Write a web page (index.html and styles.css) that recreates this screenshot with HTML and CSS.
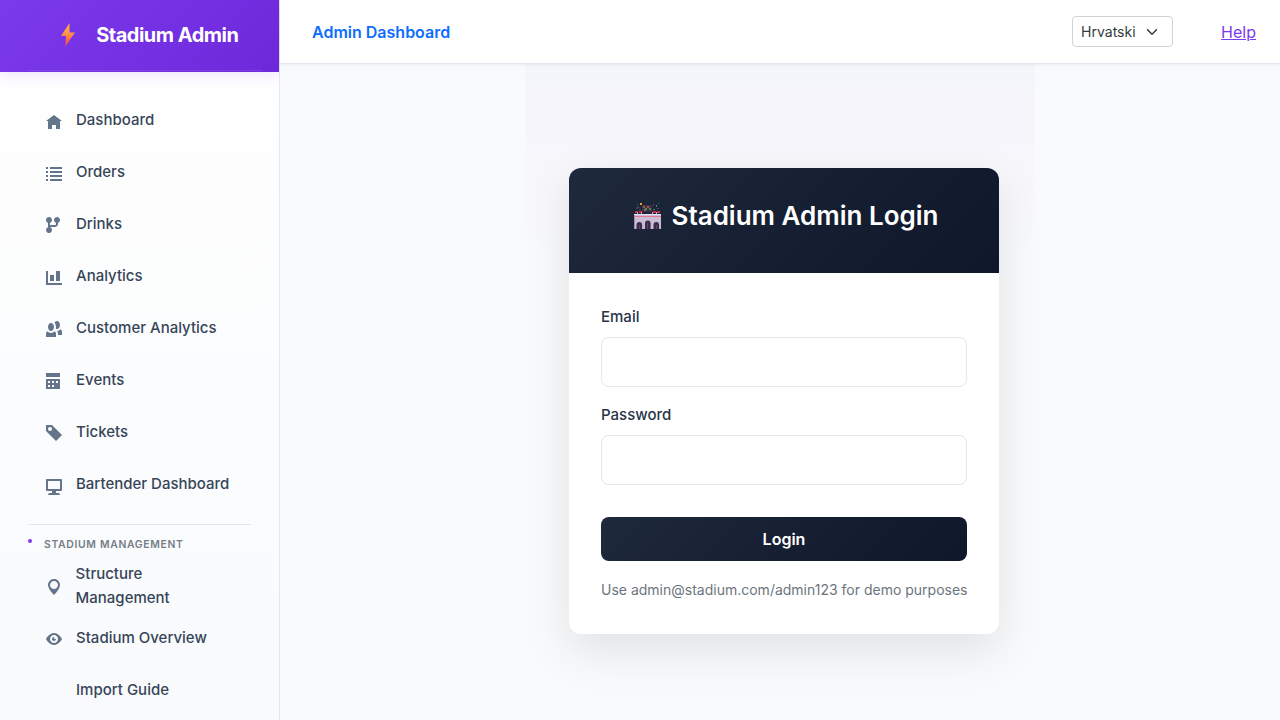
FILE: index.html
```html
<!DOCTYPE html>
<html lang="hr">
<head>
<meta charset="utf-8">
<title>Stadium Admin</title>
<link rel="stylesheet" href="styles.css">
</head>
<body>
<div class="app">
  <aside class="sidebar">
    <div class="brand">
      <svg class="bolt" viewBox="0 0 14 24"><defs><linearGradient id="fire" x1="0" y1="0" x2="0" y2="1"><stop offset="0" stop-color="#ffb13b"/><stop offset=".4" stop-color="#ff9a48"/><stop offset="1" stop-color="#f43f4e"/></linearGradient></defs><path fill="url(#fire)" d="M8.5 0 0 13h5l-.7 10.5L14 9.5H8.5z"/></svg>
      <span class="brand-name">Stadium Admin</span>
    </div>
    <nav class="nav">
      <a class="item"><svg class="icon low" viewBox="0 0 8 8"><path d="M4 0l-4 3h1v4h2v-2h2v2h2v-4.03l1 .03-4-3z"/></svg><span>Dashboard</span></a>
      <a class="item"><svg class="icon low" viewBox="0 0 8 8"><path d="M0 0h1v1H0zM2 0h6v1H2zM0 2h1v1H0zM2 2h6v1H2zM0 4h1v1H0zM2 4h6v1H2zM0 6h1v1H0zM2 6h6v1H2z"/></svg><span>Orders</span></a>
      <a class="item"><svg class="icon" viewBox="0 0 8 8"><path d="M1.5 0c-.83 0-1.5.67-1.5 1.5 0 .66.41 1.2 1 1.41v2.19c-.59.2-1 .75-1 1.41 0 .83.67 1.5 1.5 1.5s1.5-.67 1.5-1.5c0-.6-.34-1.1-.84-1.35.09-.09.21-.16.34-.16h2c.82 0 1.5-.68 1.5-1.5v-.59c.59-.2 1-.75 1-1.41 0-.83-.67-1.5-1.5-1.5s-1.5.67-1.5 1.5c0 .66.41 1.2 1 1.41v.59c0 .28-.22.5-.5.5h-2c-.17 0-.35.04-.5.09v-1.19c.59-.2 1-.75 1-1.41 0-.83-.67-1.5-1.5-1.5z"/></svg><span>Drinks</span></a>
      <a class="item"><svg class="icon low" viewBox="0 0 8 8"><path d="M0 0v7h8v-1h-7v-6h-1zm5 0v5h2v-5h-2zm-3 2v3h2v-3h-2z"/></svg><span>Analytics</span></a>
      <a class="item"><svg class="icon" viewBox="0 0 8 8"><path d="M5.5 0c-.51 0-.95.35-1.22.88.45.54.72 1.28.72 2.13 0 .29-.03.55-.09.81.19.11.38.19.59.19.83 0 1.5-.9 1.5-2s-.67-2-1.5-2zm-3 1c-.83 0-1.5.9-1.5 2s.67 2 1.5 2 1.5-.9 1.5-2-.67-2-1.5-2zm4.75 3.16c-.43.51-1.02.82-1.69.84.27.38.44.84.44 1.34v.66h2v-1.66c0-.52-.31-.97-.75-1.19zm-6.5 1c-.44.22-.75.67-.75 1.19v1.66h5v-1.66c0-.52-.31-.97-.75-1.19-.45.53-1.06.84-1.75.84s-1.3-.32-1.75-.84z"/></svg><span>Customer Analytics</span></a>
      <a class="item"><svg class="icon" viewBox="0 0 8 8"><path d="M0 0v2h7v-2h-7zm0 3v4.91c0 .05.04.09.09.09h6.81c.05 0 .09-.04.09-.09v-4.91h-7zm1 1h1v1h-1v-1zm2 0h1v1h-1v-1zm2 0h1v1h-1v-1zm-4 2h1v1h-1v-1zm2 0h1v1h-1v-1z"/></svg><span>Events</span></a>
      <a class="item"><svg class="icon" viewBox="0 0 8 8"><path d="M0 0v3l5 5 3-3-5-5h-3zm2 1c.55 0 1 .45 1 1s-.45 1-1 1-1-.45-1-1 .45-1 1-1z"/></svg><span>Tickets</span></a>
      <a class="item"><svg class="icon low" viewBox="0 0 8 8"><path d="M.34 0a.5.5 0 0 0-.34.5v5a.5.5 0 0 0 .5.5h2.5v1h-1c-.55 0-1 .45-1 1h6c0-.55-.45-1-1-1h-1v-1h2.5a.5.5 0 0 0 .5-.5v-5a.5.5 0 0 0-.5-.5h-7a.5.5 0 0 0-.16 0zm.66 1h6v4h-6v-4z"/></svg><span>Bartender Dashboard</span></a>
      <div class="section"><i class="dot"></i><span>STADIUM MANAGEMENT</span></div>
      <a class="item double"><svg class="icon" viewBox="-1 0 8 8"><path d="M3 0c-1.66 0-3 1.34-3 3 0 2 3 5 3 5s3-3 3-5c0-1.66-1.34-3-3-3zm0 1c1.11 0 2 .9 2 2 0 1.11-.89 2-2 2-1.1 0-2-.89-2-2 0-1.1.9-2 2-2z"/></svg><span>Structure<br>Management</span></a>
      <a class="item"><svg class="icon" viewBox="0 -1 8 8"><path d="M4.03 0c-2.53 0-4.03 3-4.03 3s1.5 3 4.03 3c2.47 0 3.97-3 3.97-3s-1.5-3-3.97-3zm-.03 1c1.11 0 2 .9 2 2 0 1.11-.89 2-2 2-1.1 0-2-.89-2-2 0-1.1.9-2 2-2zm0 1c-.55 0-1 .45-1 1s.45 1 1 1 1-.45 1-1c0-.1-.04-.19-.06-.28-.08.16-.24.28-.44.28-.28 0-.5-.22-.5-.5 0-.2.12-.36.28-.44-.09-.03-.18-.06-.28-.06z"/></svg><span>Stadium Overview</span></a>
      <a class="item"><span class="icon"></span><span>Import Guide</span></a>
    </nav>
  </aside>
  <div class="page">
    <header class="topbar">
      <span class="title">Admin Dashboard</span>
      <div class="language"><span>Hrvatski</span><svg class="chevron" viewBox="0 0 16 16"><path d="m2 5 6 6 6-6"/></svg></div>
      <a class="help" href="#">Help</a>
    </header>
    <main class="content">
      <div class="glow"></div>
      <form class="card">
        <div class="card-head">
          <svg class="stadium" viewBox="0 0 28 28">
            <path fill="#3b3046" d="M9 4h10v7H9z"/>
            <path fill="#a5553c" d="M10 5h2v2h-2zM14 5h2v2h-2zM11 8h2v2h-2z"/>
            <path fill="#4a8a5e" d="M12 7h2v2h-2zM16 7h2v2h-2zM23 4h1v2h-1zM20 8h2v1h-2z"/>
            <path fill="#5c3865" d="M3 6h2v2H3zM20 3h1v2h-1zM24 7h2v1h-2z"/>
            <path fill="#ef9e32" d="M7 2h2v2H7z"/>
            <path fill="#28614f" d="M5 5h1v2H5zM6 8h2v1H6zM4 3h1v1H4zM25 2h1v1h-1z"/>
            <path fill="#c72a50" d="M2 10h3v2H2zM6 10h3v2H6zM20 10h3v2h-3zM24 10h3v2h-3z"/>
            <path fill="#bcaabd" d="M4 11h1v3H4zM8 11h1v3H8zM19 11h1v3h-1zM23 11h1v3h-1z"/>
            <path fill="#cbbcd6" d="M1 14h27v14H1z"/>
            <path fill="#ece1ee" d="M1 13h27v1H1z"/>
            <path fill="#e07a90" d="M2 15h26v1H2z"/>
            <path fill="#a58eaf" d="M1 14h1v14H1z"/>
            <path fill="#3b2d4a" d="M3.500 28v-4a2.800 3 0 0 1 5.600 0v4zM12 28v-5.500a2.800 3 0 0 1 5.600 0V28zM20.500 28v-4a2.800 3 0 0 1 5.600 0v4z"/>
            <path fill="#59466a" d="M6 24h1v4H6zM14 22h1v6h-1zM23 24h1v4h-1z"/>
          </svg>
          <h1>Stadium Admin Login</h1>
        </div>
        <div class="card-body">
          <label for="email">Email</label>
          <input id="email" type="text">
          <label for="password">Password</label>
          <input id="password" type="password">
          <button type="button">Login</button>
          <p>Use admin@stadium.com/admin123 for demo purposes</p>
        </div>
      </form>
    </main>
  </div>
</div>
</body>
</html>
```
FILE: styles.css
```css
* { box-sizing: border-box; }
body { margin: 0; font-family: Inter, sans-serif; font-size: 16px; color: #1e293b; }
.app { display: flex; width: 100%; height: 720px; overflow: hidden; }
.sidebar { width: 280px; flex: none; border-right: 1px solid #e2e8f0; background: linear-gradient(180deg, #fff, #f8fafc); box-shadow: 4px 0 12px rgba(15, 23, 42, .025); }
.brand { position: relative; height: 72px; display: flex; align-items: center; padding: 0 0 2px 61px; background: linear-gradient(135deg, #7c3aed, #6d28d9); box-shadow: 0 4px 12px rgba(124, 58, 237, .12); }
.brand::after { content: ""; position: absolute; left: 28px; right: 17px; bottom: 1px; height: 1px; background: rgba(255, 255, 255, .1); }
.bolt { width: 14px; height: 24px; margin-right: 21.2px; }
.brand-name { color: #fff; font-size: 20px; font-weight: 700; letter-spacing: -.5px; }
.nav { padding-top: 22px; }
.item { height: 52px; display: flex; align-items: center; padding-left: 46px; color: #374559; font-size: 15px; line-height: 24px; font-weight: 500; }
.icon { width: 16px; height: 16px; flex: none; margin: 2px 14px 0 0; fill: #64748b; }
.icon.low { margin-top: 6px; }
.section { display: flex; align-items: center; margin: 14px 28px 0; height: 38px; border-top: 1px solid #e2e8f0; color: #757e87; font-size: 10.4px; font-weight: 600; letter-spacing: .68px; }
.section span { padding-top: 2px; }
.dot { width: 4px; height: 4px; margin: -6px 12px 0 0; border-radius: 50%; background: #7c3aed; }
.item.double { height: 48px; margin-bottom: 2px; }
.double .icon { margin-right: 13.6px; }
.page { flex: 1; display: flex; flex-direction: column; }
.topbar { position: relative; height: 64px; flex: none; display: flex; align-items: center; padding: 0 24px 0 32px; background: #fff; border-bottom: 1px solid #e2e8f0; box-shadow: 0 1px 3px rgba(0, 0, 0, .06); z-index: 1; }
.title { flex: 1; color: #0d6efd; font-weight: 600; }
.language { width: 101px; height: 31px; display: flex; align-items: center; padding: 0 14px 0 8px; justify-content: space-between; border: 1px solid #ced4da; border-radius: 4px; color: #343a40; font-size: 14px; }
.chevron { width: 12px; height: 12px; fill: none; stroke: #343a40; stroke-width: 2; stroke-linecap: round; stroke-linejoin: round; }
.help { margin-left: 48px; color: #7c3aed; }
.content { position: relative; flex: 1; display: flex; justify-content: center; align-items: flex-start; padding: 104px 0 0 8px; background: #f9fafc; }
.glow { position: absolute; left: 245px; top: 0; width: 510px; height: 190px; background: linear-gradient(180deg, rgba(80, 90, 190, .027), rgba(110, 58, 220, .025) 35%, rgba(124, 58, 237, 0)); }
.card { position: relative; width: 430px; height: 466px; border-radius: 12px; background: #fff; overflow: hidden; box-shadow: 0 16px 48px rgba(0, 0, 0, .1); }
.card-head { height: 105px; display: flex; justify-content: center; padding: 32px 0 0 1px; background: linear-gradient(135deg, #1e293b, #0f172a); color: #fff; }
.stadium { width: 28px; height: 28px; margin: 1px 11px 0 2px; }
h1 { margin: 0; font-size: 26px; line-height: 32px; font-weight: 600; }
.card-body { padding: 32px; display: flex; flex-direction: column; }
label { font-size: 15px; line-height: 24px; font-weight: 500; margin-bottom: 8px; color: #273449; }
input { height: 50px; margin: 0 0 16px; border: 1px solid #e2e8f0; border-radius: 8px; background: #fff; }
button { height: 44px; margin: 16px 0; border: 0; border-radius: 8px; background: linear-gradient(135deg, #1e293b, #0f172a); color: #fff; font: 600 16px Inter, sans-serif; }
p { margin: 0; font-size: 14px; line-height: 26px; text-align: center; color: #6c757d; white-space: nowrap; }
```
